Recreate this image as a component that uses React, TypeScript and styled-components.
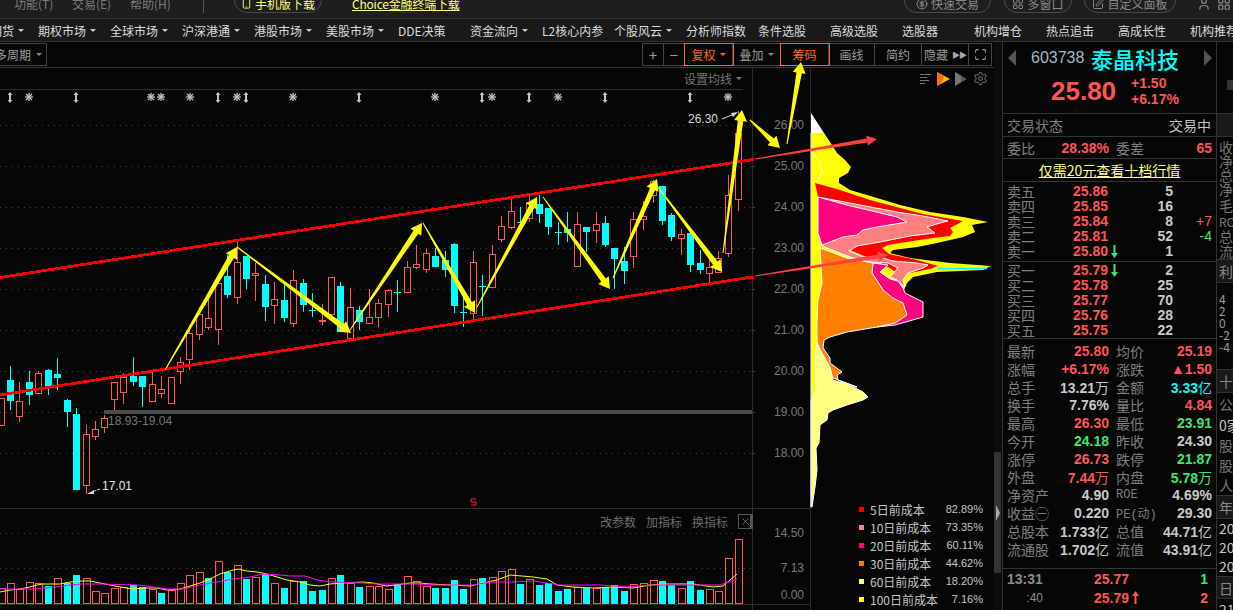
import React from "react";
import styled, { createGlobalStyle } from "styled-components";
import { Smartphone, CircleDollarSign, LayoutGrid, SquarePen, User, Maximize, Settings, X } from "lucide-react";

const CJK = `"Noto Sans CJK SC", "Liberation Sans", sans-serif`;
const NUM = `"Liberation Sans", "Noto Sans CJK SC", sans-serif`;
const RED = "#ff5555";
const GREEN = "#3fe56f";
const CYAN = "#00ffff";
const GREY = "#808080";

const GlobalStyle = createGlobalStyle`
  html, body { margin: 0; padding: 0; background: #060606; overflow: hidden; }
  #root { width: 1233px; height: 610px; }
`;

const Page = styled.div`
  width: 1233px;
  height: 610px;
  display: flex;
  flex-direction: column;
  overflow: hidden;
  background: #060606;
  font-family: ${CJK};
  font-size: 12px;
  color: #ccc;
`;

/* ---- top menu, cut off by the window edge ---- */
const TopBar = styled.div`
  box-sizing: border-box;
  height: 19px;
  padding-bottom: 11px;
  display: flex;
  align-items: center;
  background: #1e1e1e;
  border-bottom: 1px solid #343434;
  flex: none;
`;
const MenuItem = styled.span<{ $w: number; $ml?: number }>`
  width: ${(p) => p.$w}px;
  margin-left: ${(p) => p.$ml ?? 0}px;
  flex: none;
  color: #7c7c7c;
  white-space: nowrap;
`;
const MenuDivider = styled.span`
  width: 1px;
  height: 18px;
  background: #555;
  margin-right: 30px;
  flex: none;
`;
const Pill = styled.span<{ $w: number; $color?: string; $ml?: number }>`
  box-sizing: border-box;
  width: ${(p) => p.$w}px;
  height: 26px;
  flex: none;
  display: flex;
  align-items: center;
  justify-content: center;
  gap: 3px;
  border: 1px solid #4a4a4a;
  border-radius: 13px;
  color: ${(p) => p.$color ?? "#8a8a8a"};
  white-space: nowrap;
  margin-top: -8px;
  margin-left: ${(p) => p.$ml ?? 0}px;
  padding-top: 8px;
`;
const YellowLink = styled.a`
  color: #ffff80;
  text-decoration: underline;
  white-space: nowrap;
  letter-spacing: -0.2px;
  width: 552px;
  flex: none;
  margin-left: 30px;
`;
const TopIcon = styled.span<{ $ml: number }>`
  color: #8a8a8a;
  margin-left: ${(p) => p.$ml}px;
  display: flex;
`;

/* ---- nav row ---- */
const NavBar = styled.div`
  box-sizing: border-box;
  height: 23px;
  flex: none;
  display: flex;
  align-items: center;
  margin-left: -34px;
  width: 1300px;
  background: #191919;
  border-bottom: 1px solid #343434;
`;
const NavItem = styled.div`
  width: 72px;
  flex: none;
  display: flex;
  align-items: center;
  gap: 4px;
  color: #dcdcdc;
  white-space: nowrap;
`;
const Caret = styled.i<{ $c?: string }>`
  display: inline-block;
  border-left: 3px solid transparent;
  border-right: 3px solid transparent;
  border-top: 3px solid ${(p) => p.$c ?? "#c8c8c8"};
`;

/* ---- body ---- */
const Body = styled.div`
  flex: 1;
  display: flex;
  min-height: 0;
`;
const ChartColumn = styled.div`
  width: 994px;
  flex: none;
  display: flex;
  flex-direction: column;
`;
const Toolbar = styled.div`
  box-sizing: border-box;
  height: 26px;
  flex: none;
  display: flex;
  align-items: flex-start;
  justify-content: space-between;
  padding: 1px 2px 0 0;
  border-bottom: 1px solid #333;
`;
const PeriodBox = styled.div`
  box-sizing: border-box;
  width: 52px;
  height: 23px;
  margin-left: -5px;
  border: 1px solid #444;
  border-left: 0;
  display: flex;
  align-items: center;
  gap: 5px;
  color: #a0a0a0;
  font-size: 12px;
  white-space: nowrap;
`;
const ToolGroup = styled.div`
  display: flex;
  border: 1px solid #444;
  height: 23px;
  box-sizing: border-box;
`;
const ToolBtn = styled.div<{ $w: number; $active?: boolean }>`
  box-sizing: border-box;
  width: ${(p) => p.$w}px;
  display: flex;
  align-items: center;
  justify-content: center;
  gap: 4px;
  color: ${(p) => (p.$active ? "#ff6a14" : "#9a9a9a")};
  border-right: 1px solid #444;
  outline: ${(p) => (p.$active ? "1px solid #ff6a14" : "none")};
  outline-offset: 0;
  position: relative;
  font-size: ${(p) => (p.$w < 30 ? 15 : 12)}px;
  white-space: nowrap;
  &:last-child { border-right: 0; }
`;
const Chevrons = styled.span`
  font-size: 8px;
  letter-spacing: -1px;
  color: #aaa;
`;

const MainPane = styled.div`
  position: relative;
  height: 441px;
  flex: none;
`;
const VolumePane = styled.div`
  position: relative;
  flex: 1;
  border-top: 0;
`;
const ChartSvg = styled.svg`
  display: block;
  overflow: visible;
`;
const AxisText = styled.text`
  font-family: ${NUM};
  font-size: 12px;
  fill: #787878;
  text-anchor: end;
`;
const NoteText = styled.text<{ $c: string }>`
  font-family: ${NUM};
  font-size: 12px;
  fill: ${(p) => p.$c};
`;

const MaSetting = styled.div`
  position: absolute;
  top: 2px;
  left: 684px;
  display: flex;
  align-items: center;
  gap: 4px;
  color: #787878;
`;
const FlagTools = styled.div`
  position: absolute;
  top: 3px;
  left: 920px;
  display: flex;
  align-items: center;
  gap: 5px;
`;
const IndicatorTools = styled.div`
  position: absolute;
  top: 4px;
  left: 600px;
  display: flex;
  align-items: center;
  gap: 10px;
  color: #6e6e6e;
`;
const CloseBox = styled.span`
  box-sizing: border-box;
  width: 15px;
  height: 15px;
  border: 1px solid #555;
  display: flex;
  align-items: center;
  justify-content: center;
  color: #777;
`;
const Legend = styled.div`
  position: absolute;
  left: 859px;
  top: -9px;
  width: 124px;
`;
const LegendRow = styled.div`
  height: 18px;
  display: flex;
  align-items: center;
  color: #c4c4c4;
`;
const Swatch = styled.i<{ $c: string }>`
  width: 5px;
  height: 5px;
  background: ${(p) => p.$c};
  margin-right: 6px;
  flex: none;
`;
const LegendPct = styled.span`
  margin-left: auto;
  font-family: ${NUM};
  font-size: 11px;
`;

/* ---- splitter ---- */
const Splitter = styled.div`
  width: 8px;
  flex: none;
  box-sizing: border-box;
  padding-top: 410px;
  background: #0c0c0c;
`;
const SplitHandle = styled.div`
  width: 7px;
  height: 121px;
  background: #333;
  display: flex;
  align-items: center;
  justify-content: center;
`;
const SplitArrow = styled.i`
  border-top: 8px solid transparent;
  border-bottom: 8px solid transparent;
  border-left: 4px solid #aaa;
`;

/* ---- quote panel ---- */
const QuotePanel = styled.div`
  box-sizing: border-box;
  width: 215px;
  flex: none;
  display: flex;
  flex-direction: column;
  border-left: 1px solid #333;
  border-right: 1px solid #333;
`;
const Block = styled.div<{ $h: number; $pt?: number; $line?: boolean }>`
  box-sizing: border-box;
  height: ${(p) => p.$h}px;
  padding-top: ${(p) => p.$pt ?? 0}px;
  flex: none;
  border-bottom: ${(p) => (p.$line === false ? "0" : "1px solid #333")};
`;
const TitleRow = styled.div`
  height: 31px;
  display: flex;
  align-items: center;
  padding-left: 5px;
`;
const SideArrow = styled.i<{ $right?: boolean }>`
  border-top: 8px solid transparent;
  border-bottom: 8px solid transparent;
  ${(p) => (p.$right ? "border-left" : "border-right")}: 8px solid #555;
  ${(p) => (p.$right ? "margin-left: 24px" : "margin-right: 15px")};
`;
const Code = styled.span`
  font-family: ${NUM};
  font-size: 16px;
  color: #9fb6c4;
  width: 60px;
`;
const Name = styled.span`
  font-size: 22px;
  line-height: 26px;
  font-weight: 500;
  color: ${CYAN};
  width: 89px;
  white-space: nowrap;
`;
const PriceRow = styled.div`
  display: flex;
  align-items: center;
  margin-top: 2px;
  padding-left: 48px;
  gap: 16px;
`;
const BigPrice = styled.span`
  font-family: ${NUM};
  font-size: 26px;
  font-weight: 700;
  color: ${RED};
  width: 64px;
`;
const ChangeStack = styled.div`
  font-family: ${NUM};
  font-size: 14px;
  font-weight: 700;
  line-height: 16px;
  color: ${RED};
`;
const PairRow = styled.div`
  display: flex;
  align-items: center;
  justify-content: space-between;
  height: 22px;
  padding: 0 5px 0 4px;
  font-size: 14px;
  color: ${GREY};
`;
const StatusValue = styled.span`
  color: #c4c4c4;
`;
const NumValue = styled.span<{ $c?: string }>`
  font-family: ${NUM};
  font-weight: 700;
  font-size: 14px;
  color: ${(p) => p.$c ?? "#c8c8c8"};
  white-space: nowrap;
`;
const Ratio = styled.div`
  display: grid;
  grid-template-columns: 102px 96px;
  column-gap: 7px;
  padding-left: 4px;
  height: 21px;
  align-items: center;
`;
const LinkRow = styled.a`
  display: block;
  text-align: center;
  color: #ffff80;
  font-size: 14px;
  line-height: 22px;
  text-decoration: underline;
`;
const OrderRow = styled.div`
  display: grid;
  grid-template-columns: 40px 61px 13px 52px 39px;
  padding-left: 4px;
  height: 15px;
  line-height: 15px;
  align-items: center;
  font-size: 14px;
`;
const Label = styled.span`
  color: ${GREY};
  font-size: 14px;
  white-space: nowrap;
`;
const OrderPrice = styled(NumValue)`
  text-align: right;
`;
const OrderVol = styled(NumValue)`
  text-align: right;
`;
const Delta = styled.span<{ $c: string }>`
  font-family: ${NUM};
  font-size: 14px;
  text-align: right;
  color: ${(p) => p.$c};
`;
const ArrowSlot = styled.span`
  display: flex;
  justify-content: center;
`;
const StatGrid = styled.div`
  display: grid;
  grid-template-columns: 102px 96px;
  column-gap: 7px;
  grid-auto-rows: 18px;
  padding-left: 4px;
`;
const StatCell = styled.div`
  display: flex;
  align-items: center;
  justify-content: space-between;
  white-space: nowrap;
`;
const Unit = styled.span`
  font-family: ${CJK};
  font-weight: 400;
`;
const SmallLabel = styled(Label)`
  font-family: "Liberation Mono", "Noto Sans CJK SC", monospace;
  font-size: 12px;
`;
const TickRow = styled.div`
  display: grid;
  grid-template-columns: 40px 82px 13px 66px;
  padding-left: 4px;
  height: 19px;
  align-items: center;
`;
const TickTime = styled(NumValue)<{ $small?: boolean }>`
  color: #8c8c8c;
  font-weight: ${(p) => (p.$small ? 400 : 700)};
  font-size: ${(p) => (p.$small ? 12 : 14)}px;
  text-align: ${(p) => (p.$small ? "right" : "left")};
  padding-right: ${(p) => (p.$small ? 4 : 0)}px;
`;

/* ---- cut off column at the right edge ---- */
const Stub = styled.div`
  flex: 1;
  min-width: 0;
  overflow: hidden;
  display: flex;
  flex-direction: column;
  white-space: nowrap;
`;
const StubBlank = styled.div<{ $h: number }>`
  height: ${(p) => p.$h}px;
  flex: none;
`;
const StubKnob = styled.div`
  width: 6px;
  height: 10px;
  margin: 38px 0 0 10px;
  background: #333;
`;
const StubTab = styled.div<{ $h: number }>`
  box-sizing: border-box;
  height: ${(p) => p.$h}px;
  flex: none;
  background: #191919;
  border-top: 1px solid #333;
  border-bottom: 1px solid #333;
  padding-left: 2px;
  display: flex;
  align-items: center;
  font-size: 14px;
  color: #8a8a8a;
`;
const StubRow = styled.div<{ $h: number; $c?: string; $small?: boolean; $mt?: number }>`
  height: ${(p) => p.$h}px;
  line-height: ${(p) => p.$h}px;
  margin-top: ${(p) => p.$mt ?? 0}px;
  flex: none;
  padding-left: 2px;
  font-size: ${(p) => (p.$small ? 12 : 14)}px;
  color: ${(p) => p.$c ?? "#777"};
`;

/* ---- chart data, in screen pixels ---- */
type Candle = [number, "r" | "c", number, number, number, number];
const candles: Candle[] = [
  [1, "r", 398, 425, 398, 425], [10, "c", 380, 401, 366, 410], [19, "r", 401, 416, 382, 422],
  [29, "c", 382, 395, 371, 405], [38, "r", 373, 393, 371, 393], [48, "c", 370, 387, 369, 395],
  [57, "c", 374, 378, 358, 390], [67, "c", 400, 412, 399, 427], [76, "c", 414, 490, 408, 490],
  [86, "r", 434, 485, 425, 494], [95, "r", 429, 436, 421, 440], [104, "r", 418, 427, 415, 433],
  [114, "r", 382, 399, 382, 410], [123, "r", 377, 392, 373, 404], [133, "c", 376, 382, 357, 386],
  [142, "c", 376, 387, 376, 407], [152, "r", 384, 401, 372, 401], [161, "r", 389, 393, 376, 398],
  [171, "r", 377, 403, 377, 403], [180, "r", 362, 371, 357, 384], [189, "r", 333, 359, 330, 370],
  [199, "r", 314, 334, 307, 340], [208, "r", 318, 327, 297, 330], [218, "r", 283, 329, 283, 345],
  [227, "c", 276, 295, 255, 298], [237, "r", 262, 297, 241, 304], [246, "c", 256, 279, 256, 289],
  [255, "r", 273, 275, 263, 301], [265, "c", 284, 307, 275, 321], [274, "r", 299, 305, 282, 324],
  [284, "c", 300, 318, 285, 322], [293, "r", 280, 323, 270, 327], [303, "c", 283, 305, 279, 312],
  [312, "c", 310, 310, 293, 317], [322, "r", 320, 320, 304, 325], [331, "r", 277, 314, 277, 314],
  [340, "c", 286, 332, 282, 332], [350, "r", 307, 338, 288, 338], [359, "c", 310, 322, 306, 330],
  [369, "r", 317, 323, 289, 323], [378, "r", 303, 317, 299, 327], [388, "r", 290, 304, 289, 317],
  [397, "c", 292, 292, 280, 312], [407, "r", 267, 292, 261, 292], [416, "r", 264, 267, 245, 269],
  [426, "r", 253, 269, 249, 273], [435, "c", 256, 267, 248, 267], [445, "c", 260, 270, 251, 277],
  [454, "c", 244, 306, 243, 313], [463, "c", 312, 312, 293, 327], [473, "r", 262, 313, 251, 320],
  [482, "c", 286, 286, 275, 316], [492, "r", 254, 287, 245, 287], [501, "r", 226, 239, 216, 242],
  [511, "r", 211, 227, 199, 229], [520, "c", 222, 222, 207, 225], [529, "r", 202, 218, 195, 222],
  [539, "c", 204, 214, 195, 223], [548, "c", 208, 227, 208, 235], [558, "c", 232, 232, 222, 245],
  [567, "c", 229, 233, 212, 242], [577, "r", 224, 266, 212, 266], [586, "c", 227, 232, 227, 252],
  [596, "r", 224, 230, 212, 243], [605, "c", 223, 245, 216, 247], [614, "c", 248, 259, 248, 289],
  [624, "c", 261, 271, 247, 284], [633, "r", 219, 256, 212, 268], [643, "r", 216, 219, 201, 230],
  [653, "r", 181, 195, 180, 203], [662, "c", 186, 221, 186, 225], [671, "c", 215, 237, 213, 241],
  [681, "r", 234, 238, 229, 255], [690, "c", 233, 265, 233, 272], [700, "c", 263, 270, 250, 274],
  [709, "r", 267, 273, 258, 283], [718, "r", 258, 272, 251, 272], [728, "r", 195, 253, 175, 257],
  [738, "r", 133, 199, 111, 211],
];

// volume bars: colour and top edge, read left to right, one per candle
const volumeBars = "r588 r583 r589 r582 r583 c586 r578 c583 c575 r578 r591 r593 r588 r587 c585 c587 r589 c593 r590 r583 r575 r572 c578 r561 c572 r565 c579 r577 c574 r583 c588 r581 c581 c591 c590 r578 c575 r583 c587 r586 r586 r589 c584 r576 r581 r586 c588 c588 c580 c589 r579 c578 r577 r571 r569 c584 r579 c585 c583 c591 c589 r587 c588 r588 c587 c585 c591 r584 r583 r580 c581 c585 r588 c581 c590 r589 r591 r558 r539"
  .split(" ")
  .map((v) => ({ red: v[0] === "r", top: Number(v.slice(1)) }));

const volYellow =
  "0,592 10,590 20,589 30,587 37,585 43,584 60,584 70,582 80,581 90,581 100,583 110,585 120,587 133,589 143,588 157,588 167,590 180,589 190,586 200,583 210,579 220,574 233,570 238,569 247,571 257,572 267,574 277,577 287,580 300,582 310,585 320,586 330,584 343,583 363,582 373,583 387,586 410,583 420,583 430,584 450,585 470,586 483,583 497,580 510,575 533,577 547,579 557,585 573,587 593,588 613,587 633,588 650,585 667,584 693,584 713,587 723,586 737,574";
const volMagenta =
  "0,589 33,589 43,588 57,587 70,585 83,584 100,584 137,585 147,586 167,589 183,589 200,585 217,582 233,579 250,577 263,574 280,575 290,576 305,576 317,580 333,582 363,583 377,584 400,584 420,584 433,585 473,585 490,582 513,582 533,581 560,585 600,585 627,587 650,585 700,585 720,585 737,579";

const pts = (a: number[][]) => a.map((p) => p.join(",")).join(" ");

const chipYellow = [[811,133],[824,133],[830,142],[837,153],[845,160],[851,167],[848,173],[839,178],[839,183],[850,190],[877,198],[900,205],[930,212],[963,217],[988,222],[972,225],[975,232],[963,237],[937,243],[917,247],[893,250],[890,253],[910,258],[950,263],[991,266],[983,270],[937,272],[913,277],[907,283],[900,300],[820,340],[816,390],[811,400]];
const chipRed = [[815,183],[840,190],[870,200],[923,214],[963,221],[950,228],[953,232],[950,236],[933,238],[900,243],[888,245],[882,248],[889,254],[917,260],[938,266],[930,269],[900,275],[885,265],[850,250],[820,240],[818,197]];
const chipSalmon = [[818,197],[897,212],[923,216],[948,221],[940,223],[927,227],[935,233],[910,236],[880,242],[857,246],[849,251],[863,257],[883,258],[893,261],[917,263],[928,265],[923,268],[908,273],[903,280],[905,287],[897,280],[890,277],[898,268],[888,263],[870,262],[850,257],[822,246],[818,233]];
const chipMagentaTop = [[818,197],[847,205],[897,217],[907,222],[877,227],[863,230],[857,235],[843,237],[822,245],[818,233],[818,217]];
const chipMagentaLow = [[873,263],[888,265],[880,272],[890,279],[898,281],[903,288],[905,293],[923,302],[923,317],[895,325],[877,327],[883,290],[872,273]];
const chipOrange = [[820,248],[847,258],[873,263],[872,273],[883,290],[893,298],[903,303],[907,315],[895,323],[877,327],[847,332],[830,337],[824,340],[823,348],[830,358],[830,363],[842,372],[837,375],[838,380],[857,387],[833,378],[830,370],[825,360],[818,348],[817,340],[817,323],[818,300],[822,283]];
const chipPale = [[811,400],[816,390],[815,358],[817,343],[822,353],[830,367],[833,380],[850,385],[863,392],[868,397],[863,400],[847,405],[833,410],[828,413],[827,420],[820,425],[819,443],[816,448],[817,470],[815,487],[812,507],[811,507]];

// tapered arrow: thin at the tail, widest at the head, like the terminal's drawing tool
const taperArrow = (x1: number, y1: number, x2: number, y2: number, shaft = 2.8, head = 6.5, len = 11) => {
  const d = Math.hypot(x2 - x1, y2 - y1);
  const ux = (x2 - x1) / d;
  const uy = (y2 - y1) / d;
  const nx = -uy;
  const ny = ux;
  const bx = x2 - ux * len;
  const by = y2 - uy * len;
  const tail = 0.5;
  const p: number[][] = [
    [x1 + nx * tail, y1 + ny * tail],
    [bx + nx * shaft, by + ny * shaft],
    [bx + nx * head, by + ny * head],
    [x2, y2],
    [bx - nx * head, by - ny * head],
    [bx - nx * shaft, by - ny * shaft],
    [x1 - nx * tail, y1 - ny * tail],
  ];
  return pts(p.map(([a, b]) => [Math.round(a * 10) / 10, Math.round(b * 10) / 10]));
};

const yellowArrows = [
  [165, 370, 237, 247], [237, 247, 351, 333], [350, 330, 422, 223], [423, 223, 475, 313],
  [477, 307, 537, 197], [543, 197, 610, 289], [613, 278, 657, 179], [658, 187, 722, 272],
  [723, 253, 742, 110], [750, 120, 780, 148], [787, 144, 801, 62],
];

const priceLevels = [
  ["26.00", 125], ["25.00", 166], ["24.00", 207], ["23.00", 248], ["22.00", 289],
  ["21.00", 330], ["20.00", 371], ["19.00", 412], ["18.00", 453],
] as const;

const starMarks = [29, 151, 161, 190, 237, 293, 435, 492, 558, 728];
const tipMarks = [10, 76, 218, 246, 359, 482, 529, 605, 690];

const StarMark: React.FC<{ x: number }> = ({ x }) => (
  <g stroke="#c4c4c4" strokeWidth="1.3">
    <line x1={x - 4} y1={97} x2={x + 4} y2={97} />
    <line x1={x} y1={93} x2={x} y2={101} />
    <line x1={x - 3} y1={94} x2={x + 3} y2={100} />
    <line x1={x - 3} y1={100} x2={x + 3} y2={94} />
  </g>
);
const TipMark: React.FC<{ x: number }> = ({ x }) => (
  <g fill="#c4c4c4">
    <rect x={x - 1} y={94} width={2} height={7} />
    <polygon points={`${x - 2.5},95 ${x},92 ${x + 2.5},95`} />
    <polygon points={`${x - 2.5},100 ${x},103 ${x + 2.5},100`} />
  </g>
);

const CandleMark: React.FC<{ c: Candle }> = ({ c }) => {
  const [x, t, top, bot, hi, lo] = c;
  const color = t === "r" ? RED : CYAN;
  const cx = x + 0.5;
  if (t === "c") {
    return (
      <g>
        <line x1={cx} y1={hi} x2={cx} y2={lo} stroke={color} />
        {top === bot ? (
          <line x1={x - 3} y1={top + 0.5} x2={x + 4} y2={top + 0.5} stroke={color} />
        ) : (
          <rect x={x - 3} y={top} width={7} height={bot - top} fill={color} />
        )}
      </g>
    );
  }
  return (
    <g stroke={color} fill="none">
      {hi < top && <line x1={cx} y1={hi} x2={cx} y2={top} />}
      {lo > bot && <line x1={cx} y1={bot} x2={cx} y2={lo} />}
      <rect x={x - 2.5} y={top + 0.5} width={6} height={Math.max(bot - top, 1)} />
    </g>
  );
};

const MainChart: React.FC = () => (
  <ChartSvg width="994" height="441" viewBox="0 68 994 441">
    <line x1="0" y1="89.5" x2="743" y2="89.5" stroke="#2c2c2c" />
    {priceLevels.map(([label, y]) => (
      <g key={label}>
        <line x1="0" y1={y + 0.5} x2="752" y2={y + 0.5} stroke="#4a4a4a" strokeDasharray="1 5" />
        <line x1="752" y1={y + 0.5} x2="755" y2={y + 0.5} stroke="#444" />
        <AxisText x="804" y={y + 4}>{label}</AxisText>
      </g>
    ))}
    <line x1="752.5" y1="68" x2="752.5" y2="509" stroke="#2c2c2c" />
    <line x1="810.5" y1="68" x2="810.5" y2="509" stroke="#2c2c2c" />
    <line x1="0" y1="508.5" x2="810" y2="508.5" stroke="#2c2c2c" />

    {starMarks.map((x) => <StarMark key={x} x={x} />)}
    {tipMarks.map((x) => <TipMark key={x} x={x} />)}

    <rect x="104" y="410" width="648" height="4" fill="#4c4c4c" />
    <NoteText x="108" y="425" $c="#777">18.93-19.04</NoteText>

    <g shapeRendering="crispEdges">
      {candles.map((c) => <CandleMark key={c[0]} c={c} />)}
    </g>

    <polygon points={pts(chipYellow)} fill="#ffff00" />
    <polygon points="811,113 824,133 811,133" fill="#fff" />
    <polygon points={pts(chipRed)} fill="#ff0000" />
    <polygon points={pts(chipSalmon)} fill="#ff8080" stroke="#fff" />
    <polygon points={pts(chipMagentaTop)} fill="#ff0080" stroke="#fff" />
    <polygon points={pts(chipMagentaLow)} fill="#ff0080" stroke="#fff" />
    <polygon points={pts(chipOrange)} fill="#ff8000" stroke="#fff" />
    <polygon points={pts(chipPale)} fill="#ffff80" stroke="#fff" />
    <polyline points="813,153 820,163 822,172 817,182" fill="none" stroke="#fff" />
    <line x1="937" y1="268.5" x2="987" y2="268.5" stroke={CYAN} strokeWidth="1.5" />
    <line x1="811" y1="133" x2="811" y2="507" stroke="#e0e0e0" />

    <polyline points="0,277.5 752,159.7" stroke="#ff0000" strokeWidth="2.8" fill="none" shapeRendering="crispEdges" />
    <polyline points="0,395 752,277" stroke="#ff0000" strokeWidth="2.8" fill="none" shapeRendering="crispEdges" />
    <rect x="750" y="158" width="4" height="3" fill="#ff0000" />
    <rect x="750" y="276" width="4" height="3" fill="#ff0000" />
    <polygon points={taperArrow(755, 159, 877, 139, 2, 5, 10)} fill="#ff4040" />
    <polygon points={taperArrow(755, 276, 888, 255, 2, 5, 10)} fill="#ff4040" />

    {yellowArrows.map(([a, b, c, d]) => (
      <polygon key={`${a}-${b}`} points={taperArrow(a, b, c, d)} fill="#ffff00" />
    ))}

    <NoteText x="688" y="123" $c="#d8d8d8">26.30</NoteText>
    <polyline points="722,119 734,114" stroke="#d8d8d8" fill="none" />
    <polygon points="738,112 731,113 733,117" fill="#d8d8d8" />
    <NoteText x="102" y="490" $c="#e8e8e8">17.01</NoteText>
    <polyline points="100,489 92,492" stroke="#d8d8d8" fill="none" strokeDasharray="3 1" />
    <polygon points="87,494 94,490 94,494" fill="#d8d8d8" />
    <path d="M476 499 h-5 v3 h5 v3 h-5" fill="none" stroke="#ff2020" />
  </ChartSvg>
);

const VolumeChart: React.FC = () => (
  <ChartSvg width="994" height="101" viewBox="0 509 994 101">
    <line x1="0" y1="533.5" x2="752" y2="533.5" stroke="#4a4a4a" strokeDasharray="1 5" />
    <line x1="0" y1="568.5" x2="752" y2="568.5" stroke="#4a4a4a" strokeDasharray="1 5" />
    <line x1="0" y1="604.5" x2="810" y2="604.5" stroke="#2c2c2c" />
    <line x1="752.5" y1="509" x2="752.5" y2="610" stroke="#2c2c2c" />
    <line x1="810.5" y1="509" x2="810.5" y2="610" stroke="#2c2c2c" />
    <rect x="750" y="515" width="2" height="13" fill="#555" />
    {[["14.50", 533], ["7.13", 568], ["0.00", 595]].map(([t, y]) => (
      <AxisText key={t} x="804" y={Number(y) + 4}>{t}</AxisText>
    ))}
    <g shapeRendering="crispEdges">
      {volumeBars.map((b, i) => {
        const x = candles[i] ? candles[i][0] : 1 + i * 9.45;
        return b.red ? (
          <rect key={i} x={x - 3} y={b.top + 0.5} width={7} height={603 - b.top} fill="none" stroke={RED} />
        ) : (
          <rect key={i} x={x - 3} y={b.top} width={7} height={604 - b.top} fill={CYAN} />
        );
      })}
    </g>
    <polyline points={volYellow} fill="none" stroke="#ffff00" />
    <polyline points={volMagenta} fill="none" stroke="#ff00ff" />
  </ChartSvg>
);

const ThinArrow: React.FC<{ up?: boolean; color: string }> = ({ up, color }) => (
  <svg width="7" height="13" viewBox="0 0 7 13">
    <path d={up ? "M3.5 0 L7 5 H4.5 V13 H2.5 V5 H0 Z" : "M3.5 13 L7 8 H4.5 V0 H2.5 V8 H0 Z"} fill={color} />
  </svg>
);

const navItems: [string, boolean][] = [
  ["股指期货", true], ["期权市场", true], ["全球市场", true], ["沪深港通", true], ["港股市场", true],
  ["美股市场", true], ["DDE决策", false], ["资金流向", true], ["L2核心内参", false], ["个股风云", true],
  ["分析师指数", false], ["条件选股", false], ["高级选股", false], ["选股器", false], ["机构增仓", false],
  ["热点追击", false], ["高成长性", false], ["机构推荐", false],
];

const sells = [
  ["卖五", "25.86", "5", ""], ["卖四", "25.85", "16", ""], ["卖三", "25.84", "8", "+7"],
  ["卖二", "25.81", "52", "-4"], ["卖一", "25.80", "1", ""],
];
const buys = [
  ["买一", "25.79", "2"], ["买二", "25.78", "25"], ["买三", "25.77", "70"], ["买四", "25.76", "28"], ["买五", "25.75", "22"],
];

type Stat = [string, string, string, string?];
const stats: Stat[] = [
  ["最新", "25.80", RED], ["均价", "25.19", RED],
  ["涨幅", "+6.17%", RED], ["涨跌", "▲1.50", RED],
  ["总手", "13.21", "#c8c8c8", "万"], ["金额", "3.33", CYAN, "亿"],
  ["换手", "7.76%", "#c8c8c8"], ["量比", "4.84", RED],
  ["最高", "26.30", RED], ["最低", "23.91", GREEN],
  ["今开", "24.18", GREEN], ["昨收", "24.30", "#c8c8c8"],
  ["涨停", "26.73", RED], ["跌停", "21.87", GREEN],
  ["外盘", "7.44", RED, "万"], ["内盘", "5.78", GREEN, "万"],
  ["净资产", "4.90", "#c8c8c8"], ["ROE", "4.69%", "#c8c8c8"],
  ["收益㊀", "0.220", "#c8c8c8"], ["PE(动)", "29.30", "#c8c8c8"],
  ["总股本", "1.733", "#c8c8c8", "亿"], ["总值", "44.71", "#c8c8c8", "亿"],
  ["流通股", "1.702", "#c8c8c8", "亿"], ["流值", "43.91", "#c8c8c8", "亿"],
];

const legend = [
  ["#ff0000", "5日前成本", "82.89%"], ["#ff8080", "10日前成本", "73.35%"], ["#ff0080", "20日前成本", "60.11%"],
  ["#ff8000", "30日前成本", "44.62%"], ["#ffff80", "60日前成本", "18.20%"], ["#ffff00", "100日前成本", "7.16%"],
];

const App: React.FC = () => (
  <Page>
    <GlobalStyle />
    <TopBar>
      <MenuItem $w={58} $ml={14}>功能(T)</MenuItem>
      <MenuItem $w={58}>交易(E)</MenuItem>
      <MenuItem $w={73}>帮助(H)</MenuItem>
      <MenuDivider />
      <Pill $w={88} $color="#ffff80"><Smartphone size={11} />手机版下载</Pill>
      <YellowLink>Choice金融终端下载</YellowLink>
      <Pill $w={87}><CircleDollarSign size={12} />快速交易</Pill>
      <Pill $w={68} $ml={13}><LayoutGrid size={12} />多窗口</Pill>
      <Pill $w={92} $ml={12}><SquarePen size={12} />自定义面板</Pill>
      <TopIcon $ml={21}><User size={14} /></TopIcon>
      <TopIcon $ml={6}><LayoutGrid size={14} /></TopIcon>
    </TopBar>
    <NavBar>
      {navItems.map(([label, menu]) => (
        <NavItem key={label}>{label}{menu && <Caret />}</NavItem>
      ))}
    </NavBar>
    <Body>
      <ChartColumn>
        <Toolbar>
          <PeriodBox>多周期<Caret $c="#888" /></PeriodBox>
          <ToolGroup>
            <ToolBtn $w={21}>+</ToolBtn>
            <ToolBtn $w={21}>−</ToolBtn>
            <ToolBtn $w={48} $active>复权<Caret $c="#ff6a14" /></ToolBtn>
            <ToolBtn $w={48}>叠加<Caret $c="#888" /></ToolBtn>
            <ToolBtn $w={48} $active>筹码</ToolBtn>
            <ToolBtn $w={46}>画线</ToolBtn>
            <ToolBtn $w={47}>简约</ToolBtn>
            <ToolBtn $w={47}>隐藏<Chevrons>▶▶</Chevrons></ToolBtn>
            <ToolBtn $w={22}><Maximize size={13} color="#999" /></ToolBtn>
          </ToolGroup>
        </Toolbar>
        <MainPane>
          <MainChart />
          <MaSetting>设置均线<Caret $c="#777" /></MaSetting>
          <FlagTools>
            <svg width="12" height="12" viewBox="0 0 12 12" stroke="#777">
              <path d="M0 1.5h11M0 4.5h7M0 7.5h9M0 10.5h5" />
            </svg>
            <svg width="13" height="14" viewBox="0 0 13 14">
              <polygon points="0,0 13,7 0,14 3,7" fill="#ffc000" />
              <polygon points="0,0 7,4 5,10 0,14" fill="#ff7000" />
            </svg>
            <svg width="13" height="14" viewBox="0 0 13 14">
              <polygon points="0,0 12,7 0,14" fill="#555" />
              <polygon points="0,0 6,4 6,10 0,14" fill="#777" />
            </svg>
            <Settings size={15} color="#5c5c5c" />
          </FlagTools>
        </MainPane>
        <VolumePane>
          <VolumeChart />
          <IndicatorTools>
            <span>改参数</span>
            <span>加指标</span>
            <span>换指标</span>
            <CloseBox><X size={11} /></CloseBox>
          </IndicatorTools>
          <Legend>
            {legend.map(([c, label, pct]) => (
              <LegendRow key={label}>
                <Swatch $c={c} />
                {label}
                <LegendPct>{pct}</LegendPct>
              </LegendRow>
            ))}
          </Legend>
        </VolumePane>
      </ChartColumn>

      <Splitter>
        <SplitHandle><SplitArrow /></SplitHandle>
      </Splitter>

      <QuotePanel>
        <Block $h={72}>
          <TitleRow>
            <SideArrow />
            <Code>603738</Code>
            <Name>泰晶科技</Name>
            <SideArrow $right />
          </TitleRow>
          <PriceRow>
            <BigPrice>25.80</BigPrice>
            <ChangeStack>
              <div>+1.50</div>
              <div>+6.17%</div>
            </ChangeStack>
          </PriceRow>
        </Block>
        <Block $h={23}>
          <PairRow>
            <span>交易状态</span>
            <StatusValue>交易中</StatusValue>
          </PairRow>
        </Block>
        <Block $h={22}>
          <Ratio>
            <StatCell><Label>委比</Label><NumValue $c={RED}>28.38%</NumValue></StatCell>
            <StatCell><Label>委差</Label><NumValue $c={RED}>65</NumValue></StatCell>
          </Ratio>
        </Block>
        <Block $h={23}>
          <LinkRow>仅需20元查看十档行情</LinkRow>
        </Block>
        <Block $h={80} $pt={2}>
          {sells.map(([label, price, vol, delta], i) => (
            <OrderRow key={label}>
              <Label>{label}</Label>
              <OrderPrice $c={RED}>{price}</OrderPrice>
              <ArrowSlot>{i === 4 && <ThinArrow color={GREEN} />}</ArrowSlot>
              <OrderVol>{vol}</OrderVol>
              <Delta $c={delta.startsWith("+") ? RED : GREEN}>{delta}</Delta>
            </OrderRow>
          ))}
        </Block>
        <Block $h={77} $pt={1}>
          {buys.map(([label, price, vol], i) => (
            <OrderRow key={label}>
              <Label>{label}</Label>
              <OrderPrice $c={RED}>{price}</OrderPrice>
              <ArrowSlot>{i === 0 && <ThinArrow color={GREEN} />}</ArrowSlot>
              <OrderVol>{vol}</OrderVol>
              <span />
            </OrderRow>
          ))}
        </Block>
        <Block $h={230} $pt={3}>
          <StatGrid>
            {stats.map(([label, value, color, unit]) => (
              <StatCell key={label}>
                {label === "ROE" || label === "PE(动)" ? <SmallLabel>{label}</SmallLabel> : <Label>{label}</Label>}
                <NumValue $c={color}>{value}{unit && <Unit>{unit}</Unit>}</NumValue>
              </StatCell>
            ))}
          </StatGrid>
        </Block>
        <Block $h={41} $line={false}>
          <TickRow>
            <TickTime>13:31</TickTime>
            <OrderPrice $c={RED}>25.77</OrderPrice>
            <span />
            <OrderVol $c={GREEN}>1</OrderVol>
          </TickRow>
          <TickRow>
            <TickTime $small>:40</TickTime>
            <OrderPrice $c={RED}>25.79</OrderPrice>
            <ArrowSlot><ThinArrow up color={RED} /></ArrowSlot>
            <OrderVol $c={RED}>2</OrderVol>
          </TickRow>
        </Block>
      </QuotePanel>

      <Stub>
        <StubBlank $h={71}><StubKnob /></StubBlank>
        <StubTab $h={24} />
        <StubBlank $h={3} />
        <StubRow $h={14}>收</StubRow>
        <StubRow $h={14}>净</StubRow>
        <StubRow $h={14}>总</StubRow>
        <StubRow $h={15}>净</StubRow>
        <StubRow $h={17}>毛</StubRow>
        <StubRow $h={15} $small>RO</StubRow>
        <StubRow $h={15}>总</StubRow>
        <StubRow $h={15}>流</StubRow>
        <StubTab $h={24}>利</StubTab>
        <StubRow $h={12} $small $c="#999" $mt={10}>4</StubRow>
        <StubRow $h={12} $small $c="#999">2</StubRow>
        <StubRow $h={12} $small $c="#999">0</StubRow>
        <StubRow $h={12} $small $c="#999">-2</StubRow>
        <StubRow $h={12} $small $c="#999">-4</StubRow>
        <StubBlank $h={16} />
        <StubTab $h={24}>十</StubTab>
        <StubRow $h={22}>公</StubRow>
        <StubRow $h={20} $c="#c8c8c8">0家</StubRow>
        <StubRow $h={20}>股</StubRow>
        <StubRow $h={20}>股</StubRow>
        <StubRow $h={20}>人</StubRow>
        <StubTab $h={24}>年</StubTab>
        <StubRow $h={19} $c="#c8c8c8">20</StubRow>
        <StubRow $h={19} $c="#c8c8c8">20</StubRow>
        <StubRow $h={19} $c="#c8c8c8">20</StubRow>
        <StubTab $h={23}>日</StubTab>
        <StubRow $h={20} $c="#c8c8c8">21</StubRow>
      </Stub>
    </Body>
  </Page>
);

export default App;
